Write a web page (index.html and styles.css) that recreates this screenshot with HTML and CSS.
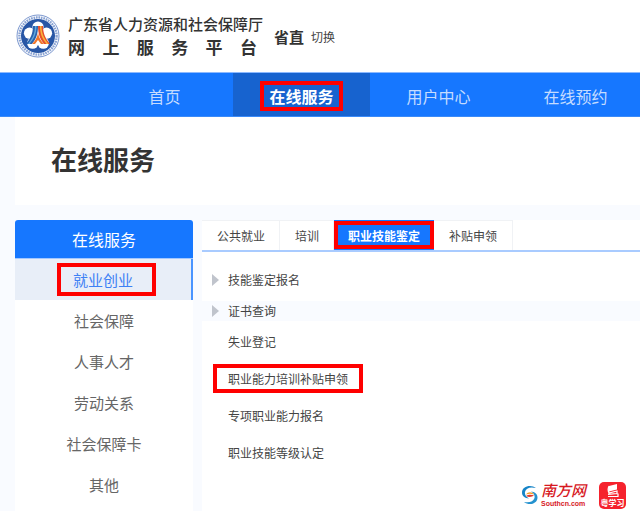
FILE: index.html
```html
<!DOCTYPE html>
<html lang="zh-CN">
<head>
	<meta charset="UTF-8">
	<meta name="viewport" content="width=device-width, initial-scale=1.0">
	<title>在线服务</title>
	<link rel="stylesheet" href="styles.css">
</head>
<body>
	<header class="header">
		<svg class="emblem" viewBox="0 0 44 44" aria-hidden="true">
			<circle cx="22" cy="22" r="21" fill="#fff" stroke="#7c98cf" stroke-width="1"/>
			<circle cx="22" cy="22" r="18.6" fill="none" stroke="#8aa3d3" stroke-width="2.4" stroke-dasharray="1.7 .8"/>
			<circle cx="22" cy="22" r="17" fill="#2856a5"/>
			<g fill="#fff">
				<circle cx="22" cy="13" r="5.6"/>
				<circle cx="30.500" cy="19.200" r="5.6"/>
				<circle cx="27.300" cy="29.200" r="5.6"/>
				<circle cx="16.700" cy="29.200" r="5.6"/>
				<circle cx="13.500" cy="19.200" r="5.6"/>
				<circle cx="22" cy="22" r="9"/>
			</g>
			<path d="M17 12h5c0 8-2 13-6 18H10c4-5 7-10 7-18z" fill="#2a62ad"/>
			<path d="M19 12h1.500c0 8-3 13-7 18h-1.500c4-5 7-10 7-18z" fill="#62a9dc"/>
			<path d="M22 12h5c0 8 3 13 7 18h-6c-4-5-6-10-6-18z" fill="#e6502b"/>
			<path d="M24 12h1.500c0 8 3 13 7 18h-2c-4-5-6.500-10-6.500-18z" fill="#f9b53c"/>
			<path d="M22 19c-1 5-3 8-6 11h3l3-4 3 4h3c-3-3-5-6-6-11z" fill="#f0762c"/>
		</svg>
		<div class="brand">
			<div class="brand-org">广东省人力资源和社会保障厅</div>
			<div class="brand-name">网上服务平台</div>
		</div>
		<div class="region">
			<strong>省直</strong>
			<a href="#">切换</a>
		</div>
	</header>

	<nav class="nav">
		<a href="#">首页</a>
		<a href="#" class="active"><span class="mark">在线服务</span></a>
		<a href="#">用户中心</a>
		<a href="#">在线预约</a>
	</nav>

	<div class="banner">
		<h1>在线服务</h1>
	</div>

	<div class="container">
		<aside class="sidebar">
			<h2>在线服务</h2>
			<a href="#" class="active"><span class="mark">就业创业</span></a>
			<a href="#">社会保障</a>
			<a href="#">人事人才</a>
			<a href="#">劳动关系</a>
			<a href="#">社会保障卡</a>
			<a href="#">其他</a>
		</aside>

		<main class="content">
			<div class="tabs">
				<button type="button">公共就业</button>
				<button type="button">培训</button>
				<button type="button" class="active">职业技能鉴定</button>
				<button type="button">补贴申领</button>
			</div>
			<div class="groups">
				<a href="#" class="group">技能鉴定报名</a>
				<a href="#" class="group open">证书查询</a>
			</div>
			<ul class="services">
				<li><a href="#">失业登记</a></li>
				<li><a href="#" class="mark">职业能力培训补贴申领</a></li>
				<li><a href="#">专项职业能力报名</a></li>
				<li><a href="#">职业技能等级认定</a></li>
			</ul>
		</main>
	</div>

	<div class="partners">
		<svg class="swirl" viewBox="0 0 16 20" aria-hidden="true">
			<path d="M14 3C9-1 0 1 0 7.500c0 4 3 5.500 7 6-3-2-4.500-4-4-6.500C4 3 8 1.500 14 3z" fill="#1684c7"/>
			<path d="M2 17c5 4 13.500 2 13.500-4.500 0-4-3-5.500-6.500-6 3 2 4 4 3.500 6.500-1 3.500-5 5-10.500 4z" fill="#2492cf"/>
			<path d="M4 9.500c2-3 6-3 8 0-3-1-5-1-8 0z" fill="#f39a1e"/>
			<path d="M4 11c2-1.500 6-1.500 8-.5-2 1.500-5 2-8 .5z" fill="#e2382c"/>
		</svg>
		<div class="southcn">
			<div class="southcn-name">南方网</div>
			<div class="southcn-url">Southcn.com</div>
		</div>
		<div class="study">
			<svg viewBox="0 0 16 15" aria-hidden="true">
				<path d="M4 3l8-2v5.500L4 8.500z" fill="#fff"/>
				<path d="M4 3C3 5 3 8 4 10l8-2v2.500l-9 .8M3 13.500h10v-3" fill="none" stroke="#fff" stroke-width="1.200"/>
			</svg>
			<span>粤学习</span>
		</div>
	</div>
</body>
</html>
```

FILE: styles.css
```css
*{
	box-sizing: border-box;
}
body{
	position: relative;
	display: flex;
	flex-direction: column;
	min-height: 100vh;
	margin: 0;
	background-color: #f9fbff;
	color: #444;
	font-family: "Noto Sans CJK SC", sans-serif;
	font-size: 12px;
}
a{
	color: inherit;
	text-decoration: none;
}

.header{
	display: flex;
	align-items: center;
	height: 72px;
	padding-left: 16px;
	background-color: #fff;
}
.emblem{
	width: 44px;
	height: 44px;
	margin-right: 8px;
}
.brand{
	width: 189px;
	color: #333;
}
.brand-org{
	font-size: 15px;
	line-height: 22px;
	font-weight: 500;
	white-space: nowrap;
}
.brand-name{
	font-size: 17px;
	line-height: 24px;
	font-weight: bold;
	text-align: justify;
	text-align-last: justify;
}
.region{
	display: flex;
	align-items: center;
	gap: 7px;
	margin-left: 17px;
}
.region strong{
	font-size: 15px;
	color: #333;
}

.nav{
	display: flex;
	height: 45px;
	padding-left: 96px;
	overflow: hidden;
	border-top: 1px solid #8cb9ff;
	border-bottom: 1px solid #3a8af8;
	background-color: #1677ff;
}
.nav a{
	flex: 0 0 137px;
	line-height: 46px;
	font-size: 16px;
	text-align: center;
	color: #c5dcff;
}
.nav .active{
	background-color: #1763cf;
	font-weight: bold;
	color: #fff;
}

/* red frame round the highlighted entries */
.mark{
	position: relative;
}
.mark::after, .tabs .active::after{
	content: "";
	position: absolute;
	border: 4px solid #f00;
}
.nav .mark::after{
	inset: -3px -9px;
}
.sidebar .mark::after{
	inset: -6px -23px -6px -16px;
}
.services .mark::after{
	inset: -6px -15px;
}

.banner{
	margin-left: 15px;
	padding: 22px 36px 26px;
	background-color: #fff;
}
.banner h1{
	margin: 0;
	font-size: 26px;
	line-height: 40px;
	color: #333;
}

.container{
	flex: 1;
	display: flex;
	gap: 9px;
	padding: 15px 0 0 15px;
}
.sidebar{
	flex: 0 0 178px;
	border-radius: 3px 3px 0 0;
	background-color: #fff;
	text-align: center;
}
.sidebar h2{
	margin: 0;
	border-bottom: 1px solid #a3c8ff;
	border-radius: 3px 3px 0 0;
	background-color: #1677ff;
	font-size: 16px;
	line-height: 38px;
	font-weight: normal;
	color: #fff;
}
.sidebar a{
	display: block;
	font-size: 15px;
	line-height: 41px;
	color: #666;
}
.sidebar .active{
	border-right: 2px solid #4a94ff;
	background-color: #e8eef8;
	color: #3d80f5;
}

.content{
	flex: 1;
	background-color: #fff;
}
.tabs{
	display: flex;
	border-bottom: 2px solid #a9cbff;
}
.tabs button{
	position: relative;
	height: 30px;
	padding: 0 15px;
	border: solid #f0f2f5;
	border-width: 1px 1px 0 0;
	background-color: #fff;
	font-family: inherit;
	font-size: 12px;
	color: #444;
}
.tabs button:not(:last-child){
	padding-right: 14px;
}
.tabs .active{
	padding-left: 14px;
	border: none;
	background-color: #1677ff;
	font-weight: bold;
	color: #fff;
}
.tabs .active::after{
	inset: 1px 0;
}

.groups{
	padding-top: 7px;
}
.group{
	display: flex;
	align-items: center;
	gap: 9px;
	padding-left: 10px;
	line-height: 42px;
}
.group::before{
	content: "";
	border: solid transparent;
	border-width: 6px 0 6px 7px;
	border-left-color: #c0c4cc;
}
.open{
	background-color: #f9fbff;
	line-height: 20px;
}
.services{
	margin: 0;
	padding: 2px 0 0 26px;
	list-style: none;
	line-height: 37px;
}

.partners{
	position: absolute;
	right: 14px;
	bottom: 2px;
	display: flex;
	align-items: center;
}
.swirl{
	width: 16px;
	height: 20px;
	margin-right: 3px;
}
.southcn{
	margin-right: 13px;
	color: #d7191f;
}
.southcn-name{
	font-size: 15px;
	line-height: 18px;
	font-style: italic;
	font-weight: 500;
}
.southcn-url{
	font-family: "Liberation Sans", sans-serif;
	font-size: 7px;
	line-height: 10px;
	font-weight: bold;
}
.study{
	display: flex;
	flex-direction: column;
	align-items: center;
	width: 27px;
	height: 27px;
	padding-top: 1px;
	border-radius: 5px;
	background-color: #f5222d;
	font-size: 8px;
	line-height: 9px;
	font-weight: bold;
	color: #fff;
}
.study svg{
	width: 16px;
	height: 15px;
}
```
